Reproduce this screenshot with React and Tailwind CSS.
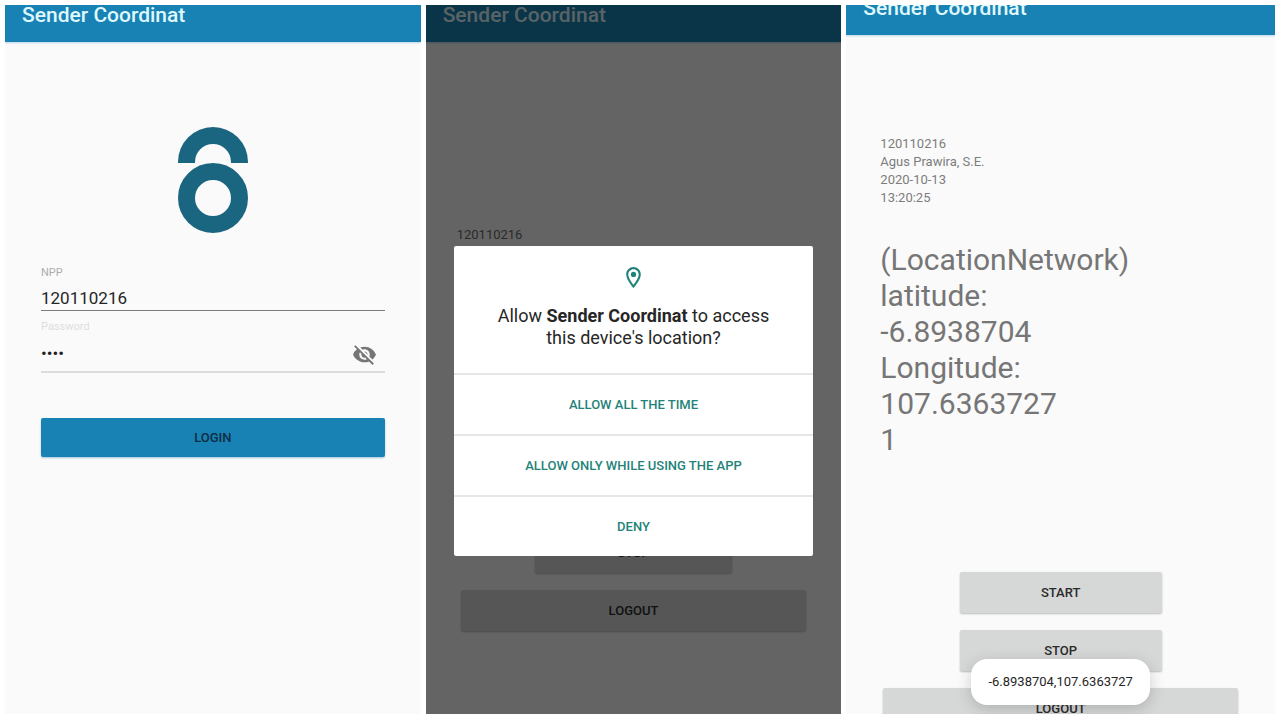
import React from "react";
import { MdVisibilityOff, MdOutlineLocationOn } from "react-icons/md";

function Screen({ children }) {
  return (
    <section className="relative flex min-w-0 flex-col overflow-hidden bg-[#fafafa]">
      {children}
    </section>
  );
}

function AppBar({ height }) {
  return (
    <header
      className={`flex shrink-0 items-end overflow-hidden bg-[#1982b4] pb-[17px] pl-[17px] shadow-[0_1px_2px_rgba(25,130,180,0.3)] ${height}`}
    >
      <h1 className="text-[21px] leading-5 font-medium whitespace-nowrap text-[#dff8fd]">
        Sender Coordinat
      </h1>
    </header>
  );
}

function GreyButton({ children, width }) {
  return (
    <button
      type="button"
      className={`h-[41px] shrink-0 rounded-xs bg-[#d6d7d7] text-[13px] leading-4 font-medium text-[#2b2b2b] shadow-[0_1px_2px_rgba(0,0,0,0.25)] ${width}`}
    >
      {children}
    </button>
  );
}

function Logo() {
  return (
    <svg viewBox="0 0 70 106" className="h-[106px] w-[70px] self-center" aria-hidden="true">
      <path d="M0 36V35A35 35 0 0 1 70 35V36H53V35A18 18 0 0 0 17 35V36Z" fill="#1a657f" />
      <circle cx="35" cy="71" r="26.5" fill="none" stroke="#1a657f" strokeWidth="17" />
    </svg>
  );
}

function LoginScreen() {
  return (
    <Screen>
      <AppBar height="h-[37px]" />
      <form className="flex flex-col px-9 pt-[85px]" onSubmit={(e) => e.preventDefault()}>
        <Logo />
        <label htmlFor="npp" className="mt-8 text-[11px] leading-4 text-[#adadad]">
          NPP
        </label>
        <input
          id="npp"
          type="text"
          defaultValue="120110216"
          className="h-[30px] w-full border-b border-[#7d7d7d] bg-transparent pt-1 text-[17px] text-[#262626] outline-none"
        />
        <label htmlFor="password" className="mt-2 text-[11px] leading-4 text-[#dedede]">
          Password
        </label>
        <div className="flex h-[38px] items-center border-b-2 border-[#dcdcdc] pt-0.5 pr-2">
          <input
            id="password"
            type="password"
            defaultValue="1234"
            className="min-w-0 flex-1 bg-transparent text-[17px] text-[#1d1d1d] outline-none"
          />
          <button type="button" aria-label="Show password">
            <MdVisibilityOff className="size-[25px] text-[#757575]" />
          </button>
        </div>
        <button
          type="submit"
          className="mt-[45px] h-[39px] rounded-xs bg-[#1982b4] text-[13px] font-medium text-[#0e2c44] shadow-[0_1px_2px_rgba(25,130,180,0.4)]"
        >
          LOGIN
        </button>
      </form>
    </Screen>
  );
}

function DialogButton({ children }) {
  return (
    <button
      type="button"
      className="h-[61px] border-t-2 border-[#e6e6e6] text-[13px] leading-4 font-medium text-[#1f8379]"
    >
      {children}
    </button>
  );
}

function PermissionScreen() {
  return (
    <Screen>
      <AppBar height="h-[37px]" />
      <main className="flex flex-col items-center px-[31px] pt-[184px]">
        <p className="self-start text-[13px] leading-[18px] text-[#6b6b6b]">120110216</p>
        <div className="flex w-full flex-col items-center gap-[17px] px-1 pt-[230px]">
          <GreyButton width="w-[57%]">START</GreyButton>
          <GreyButton width="w-[57%]">STOP</GreyButton>
          <GreyButton width="w-full">LOGOUT</GreyButton>
        </div>
      </main>
      <div className="absolute inset-0 bg-black/60 px-7 pt-[241px]">
        <div
          role="dialog"
          aria-labelledby="permission-title"
          className="flex flex-col overflow-hidden rounded-xs bg-white"
        >
          <div className="flex h-[127px] flex-col items-center pt-[19px]">
            <MdOutlineLocationOn className="size-[25px] text-[#1f8379]" />
            <h2
              id="permission-title"
              className="mt-[15px] text-center text-[18px] leading-[22px] font-normal text-[#262626]"
            >
              Allow <b className="font-bold">Sender Coordinat</b> to access
              <br />
              this device's location?
            </h2>
          </div>
          <DialogButton>ALLOW ALL THE TIME</DialogButton>
          <DialogButton>ALLOW ONLY WHILE USING THE APP</DialogButton>
          <DialogButton>DENY</DialogButton>
        </div>
      </div>
    </Screen>
  );
}

function TrackingScreen() {
  return (
    <Screen>
      <AppBar height="h-[30px]" />
      <main className="flex flex-col px-[34px] pt-[100px]">
        <div className="text-[13px] leading-[18px] text-[#7d7d7d]">
          <p>120110216</p>
          <p>Agus Prawira, S.E.</p>
          <p>2020-10-13</p>
          <p>13:20:25</p>
        </div>
        <div className="pt-[35px] text-[30px] leading-9 text-[#767676]">
          <p>(LocationNetwork)</p>
          <p>latitude:</p>
          <p>-6.8938704</p>
          <p>Longitude:</p>
          <p>107.6363727</p>
          <p>1</p>
        </div>
        <div className="flex flex-col items-center gap-[17px] px-[3px] pt-[114px]">
          <GreyButton width="w-[57%]">START</GreyButton>
          <GreyButton width="w-[57%]">STOP</GreyButton>
          <GreyButton width="w-full">LOGOUT</GreyButton>
        </div>
      </main>
      <div className="absolute inset-x-0 bottom-[9px] flex justify-center">
        <div
          role="status"
          className="rounded-2xl bg-white px-[17px] py-[15px] text-[13px] leading-4 text-[#262626] shadow-[0_4px_16px_rgba(0,0,0,0.18)]"
        >
          -6.8938704,107.6363727
        </div>
      </div>
    </Screen>
  );
}

export default function App() {
  return (
    <div className="grid h-screen grid-cols-[416fr_416fr_429fr] gap-[5px] bg-white px-[5px] pt-[5px] pb-1.5 font-['Roboto','Liberation_Sans',sans-serif]">
      <LoginScreen />
      <PermissionScreen />
      <TrackingScreen />
    </div>
  );
}
